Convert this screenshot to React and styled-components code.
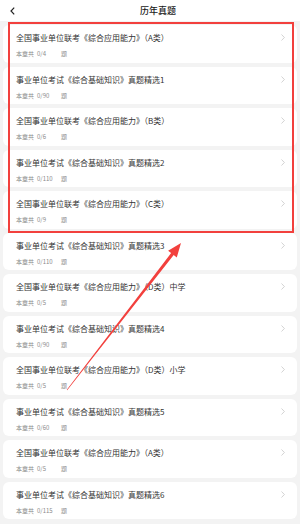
import styled, { createGlobalStyle } from 'styled-components';

const GlobalStyle = createGlobalStyle`
	html, body {
		margin: 0;
		padding: 0;
		background: #f3f3f3;
		overflow: hidden;
	}
	body {
		font-family: 'Noto Sans CJK SC', 'Noto Sans', sans-serif;
	}
`;

const Page = styled.div`
	width: 300px;
	height: 524px;
	overflow: hidden;
	position: relative;
	background: #f3f3f3;
`;

const Header = styled.div`
	height: 21px;
	background: #fff;
	display: flex;
	align-items: center;
	justify-content: center;
	position: relative;
`;

const Back = styled.button`
	position: absolute;
	left: 8px;
	top: 6px;
	width: 8px;
	height: 10px;
	padding: 0;
	border: none;
	background: none;
	display: flex;
	align-items: center;
	justify-content: center;
`;

const Title = styled.h1`
	margin: 0 0 0 16px;
	font-size: 9px;
	line-height: 21px;
	font-weight: 500;
	color: #1a1a1a;
`;

const List = styled.ul`
	list-style: none;
	margin: 0;
	padding: 4px 3px;
	display: flex;
	flex-direction: column;
	gap: 4px;
	position: relative;
`;

const Card = styled.li`
	background: #fff;
	border-radius: 6px;
	padding: 8px 13px 4.5px;
	position: relative;
`;

const CardTitle = styled.p`
	margin: 0 0 7px;
	font-size: 8px;
	line-height: 10px;
	color: #333;
	white-space: nowrap;
`;

const CardMeta = styled.p`
	margin: 0;
	font-size: 6px;
	line-height: 8px;
	color: #8a8a8a;
	display: flex;
	white-space: nowrap;
`;

const Count = styled.span`
	width: 24px;
	margin-left: 3px;
`;

const Chevron = styled.svg`
	position: absolute;
	right: 12px;
	top: 9px;
`;

const Highlight = styled.div`
	position: absolute;
	left: 8px;
	top: 1px;
	width: 286px;
	height: 211px;
	border: 2px solid #f2403d;
	box-sizing: border-box;
	pointer-events: none;
`;

const Arrow = styled.svg`
	position: absolute;
	left: 0;
	top: 0;
	pointer-events: none;
`;

const items = [
	['全国事业单位联考《综合应用能力》（A类）', '0/4'],
	['事业单位考试《综合基础知识》真题精选1', '0/90'],
	['全国事业单位联考《综合应用能力》（B类）', '0/6'],
	['事业单位考试《综合基础知识》真题精选2', '0/110'],
	['全国事业单位联考《综合应用能力》（C类）', '0/9'],
	['事业单位考试《综合基础知识》真题精选3', '0/110'],
	['全国事业单位联考《综合应用能力》（D类）中学', '0/5'],
	['事业单位考试《综合基础知识》真题精选4', '0/90'],
	['全国事业单位联考《综合应用能力》（D类）小学', '0/5'],
	['事业单位考试《综合基础知识》真题精选5', '0/60'],
	['全国事业单位联考《综合应用能力》（A类）', '0/5'],
	['事业单位考试《综合基础知识》真题精选6', '0/115'],
];

const App = () => {
	return (
		<Page>
			<GlobalStyle />
			<Header>
				<Back aria-label="back">
					<svg width="5" height="8" viewBox="0 0 5 8">
						<polyline points="4.2,0.6 1,4 4.2,7.4" fill="none" stroke="#222" strokeWidth="1.2" />
					</svg>
				</Back>
				<Title>历年真题</Title>
			</Header>

			<List>
				{items.map(([name, count], i) => (
					<Card key={i}>
						<CardTitle>{name}</CardTitle>
						<CardMeta>
							本章共<Count>{count}</Count>题
						</CardMeta>
						<Chevron width="4" height="7" viewBox="0 0 4 7">
							<polyline points="0.5,0.5 3.4,3.5 0.5,6.5" fill="none" stroke="#c8c8c8" strokeWidth="0.8" />
						</Chevron>
					</Card>
				))}
				<Highlight />
			</List>

			<Arrow width="300" height="524" viewBox="0 0 300 524">
				<polygon
					points="66.8,389.8 171.1,253.1 168.1,250.7 181,243 176.8,257.4 173.7,255.1 67.2,390.2"
					fill="#f2403d"
				/>
			</Arrow>
		</Page>
	);
};

export default App;
